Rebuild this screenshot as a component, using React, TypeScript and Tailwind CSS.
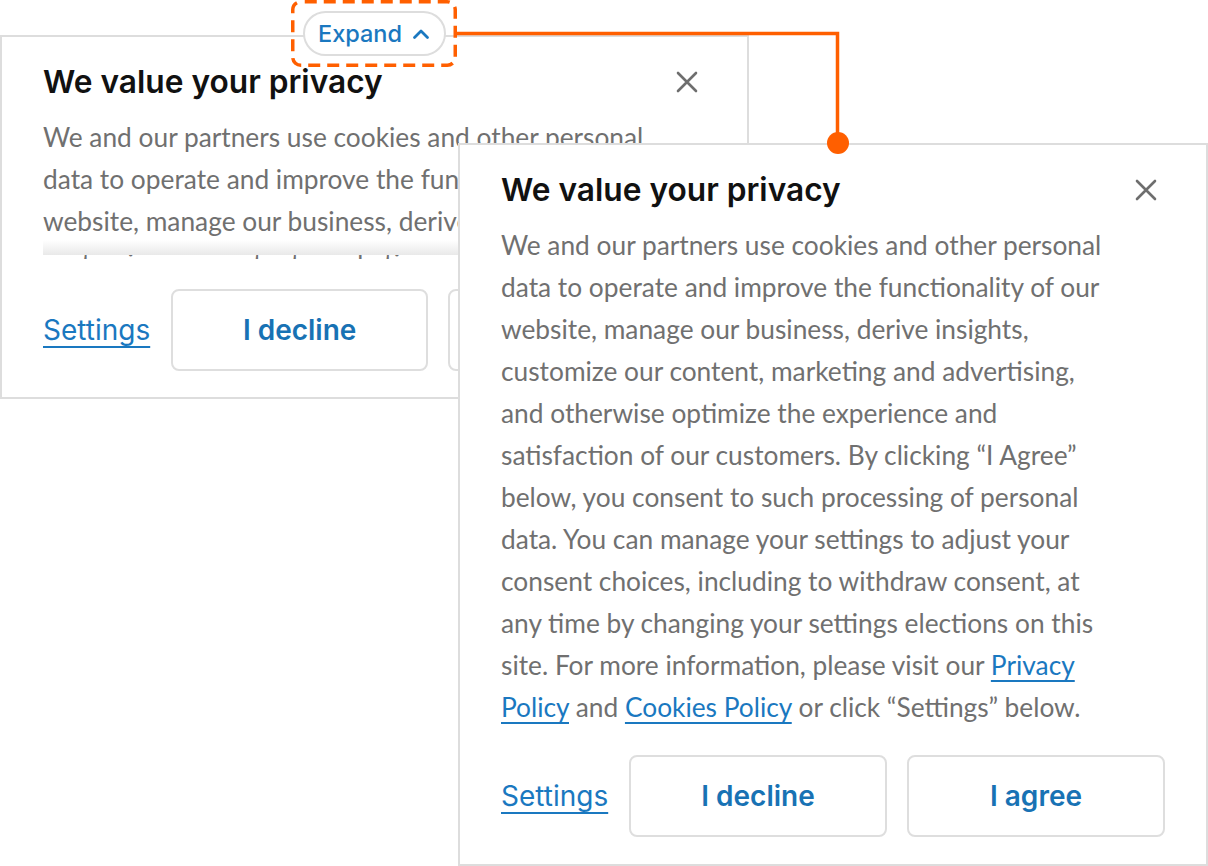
import React from "react";

const bodyFont = {fontFamily: '"Lato", "Noto Sans", sans-serif'};
const uiFont = {fontFamily: '"Inter", "Roboto", sans-serif'};

function CloseIcon() {
    return (
        <svg width="24" height="24" viewBox="0 0 24 24" fill="none" stroke="#6e6e6e" strokeWidth="2.6"
             strokeLinecap="round">
            <path d="M3 3 L21 21 M21 3 L3 21"/>
        </svg>
    );
}

function Link({children}: { children: React.ReactNode }) {
    return (
        <a href="#"
           className="text-[#1a78c0] underline decoration-2 underline-offset-[5px]">
            {children}
        </a>
    );
}

function Body() {
    return (
        <p className="w-[622px] text-[26.3px] leading-[42px] text-[#707070]" style={bodyFont}>
            We and our partners use cookies and other personal data to operate and improve the functionality of our
            website, manage our business, derive insights, customize our content, marketing and advertising, and
            otherwise optimize the experience and satisfaction of our customers. By clicking “I Agree” below, you
            consent to such processing of personal data. You can manage your settings to adjust your consent choices,
            including to withdraw consent, at any time by changing your settings elections on this site. For more
            information, please visit our <Link>Privacy Policy</Link> and <Link>Cookies Policy</Link> or click
            “Settings” below.
        </p>
    );
}

function Footer() {
    return (
        <div className="flex items-center gap-5" style={uiFont}>
            <a href="#"
               className="w-[108px] text-[28px] text-[#1a78c0] underline decoration-2 underline-offset-[6px]">
                Settings
            </a>
            <button
                className="w-[258px] h-[82px] rounded-lg border-2 border-[#dedede] bg-white text-[28px] font-semibold text-[#1872b4]">
                I decline
            </button>
            <button
                className="w-[258px] h-[82px] rounded-lg border-2 border-[#dedede] bg-white text-[28px] font-semibold text-[#1872b4]">
                I agree
            </button>
        </div>
    );
}

function Header() {
    return (
        <div className="flex items-center justify-between h-10">
            <h2 className="text-[31.7px] font-semibold text-[#111]" style={uiFont}>
                We value your privacy
            </h2>
            <button className="w-[38px] h-10 grid place-items-center" aria-label="Close">
                <CloseIcon/>
            </button>
        </div>
    );
}

function CollapsedCard() {
    return (
        <div className="relative mt-[35px] w-[749px] h-[364px] border-2 border-[#dddddd] bg-white px-[41px] pt-[25px]">
            <Header/>
            {/* clipped preview with a soft shadow along its lower edge */}
            <div className="relative mt-[14px] h-[143px] overflow-hidden">
                <Body/>
                <div
                    className="absolute inset-x-0 bottom-[4px] h-[15px] bg-gradient-to-b from-white to-[#e9e9e9]"/>
            </div>
            <div className="mt-[30px]">
                <Footer/>
            </div>
        </div>
    );
}

function ExpandedCard() {
    return (
        <div
            className="absolute left-[458px] top-[143px] w-[750px] h-[723px] border-2 border-[#dddddd] bg-white px-[41px] pt-[25px]">
            <Header/>
            <div className="mt-[14px]">
                <Body/>
            </div>
            <div className="mt-[27px]">
                <Footer/>
            </div>
        </div>
    );
}

export default function App() {
    return (
        <div className="relative w-[1208px] h-[866px] overflow-hidden bg-white">
            <CollapsedCard/>
            <ExpandedCard/>

            {/* connector from the Expand control to the expanded card */}
            <svg className="absolute left-0 top-0 pointer-events-none" width="1208" height="866">
                <path d="M457 33.5 H837.5 V143" fill="none" stroke="#ff5f00" strokeWidth="3.5"/>
                <circle cx="838" cy="143" r="11" fill="#ff5f00"/>
            </svg>

            <div className="absolute left-[291px] top-0 w-[166px] h-[67px] grid place-items-center">
                <svg className="absolute inset-0" width="166" height="67">
                    <rect x="1.75" y="1.75" width="162.5" height="63.5" rx="8" fill="none" stroke="#ff5f00"
                          strokeWidth="3.5" strokeDasharray="12 7" strokeDashoffset="-4"/>
                </svg>
                <div
                    className="relative flex items-center justify-center gap-[10px] w-[143px] h-[45px] rounded-full border-2 border-[#dddddd] bg-white text-[23.5px] font-medium text-[#1a78c0]"
                    style={uiFont}>
                    Expand
                    <svg width="18" height="12" viewBox="0 0 18 12" fill="none" stroke="#1a78c0" strokeWidth="2.8"
                         strokeLinecap="round" strokeLinejoin="round">
                        <path d="M2.5 9.5 L9 3 L15.5 9.5"/>
                    </svg>
                </div>
            </div>
        </div>
    );
}
